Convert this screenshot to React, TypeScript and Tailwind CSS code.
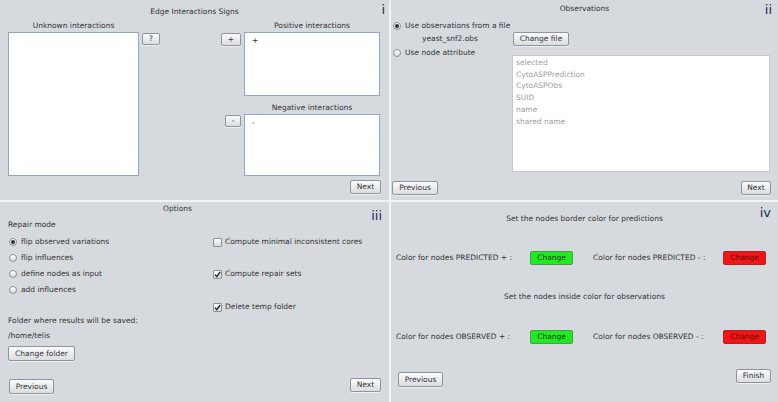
import React from "react";

const font = { fontFamily: '"DejaVu Sans", "Liberation Sans", sans-serif' };

function Btn({ children, className = "" }: { children: React.ReactNode; className?: string }) {
  return (
    <div
      className={`flex items-center justify-center rounded-[2px] border border-[#8e949b] bg-linear-to-b from-[#fbfbfc] to-[#dadde1] text-[#333] shadow-[0_1px_0_rgba(255,255,255,0.6)] ${className}`}
    >
      {children}
    </div>
  );
}

function ColorBtn({ color }: { color: "green" | "red" }) {
  return color === "green" ? (
    <div className="flex h-[14px] w-[43px] items-center justify-center rounded-[2px] border border-[#4f9a4f] bg-[#22ea22] text-[#1a3a1a]">
      Change
    </div>
  ) : (
    <div className="flex h-[14px] w-[43px] items-center justify-center rounded-[2px] border border-[#b52020] bg-[#ee1616] text-[#6a0a0a]">
      Change
    </div>
  );
}

function Radio({ on = false }: { on?: boolean }) {
  return (
    <span className="inline-flex h-[8px] w-[8px] shrink-0 items-center justify-center rounded-full border border-[#8a9098] bg-linear-to-b from-white to-[#d6d9de]">
      {on && <span className="h-[4px] w-[4px] rounded-full bg-[#28303c]" />}
    </span>
  );
}

function Check({ on = false }: { on?: boolean }) {
  return (
    <span className="inline-flex h-[9px] w-[9px] shrink-0 items-center justify-center rounded-[1px] border border-[#8a9098] bg-linear-to-b from-white to-[#d6d9de]">
      {on && (
        <svg width="7" height="7" viewBox="0 0 7 7">
          <path d="M1 3.6 L2.8 5.6 L6.2 1" stroke="#1e2a3a" strokeWidth="1.4" fill="none" />
        </svg>
      )}
    </span>
  );
}

function Num({ children }: { children: React.ReactNode }) {
  return <span className="text-[13px] leading-[13px] text-[#1b2a55]">{children}</span>;
}

function PanelI() {
  return (
    <div className="relative h-[200px] bg-[#d6d9de]">
      <div className="absolute right-[4px] top-[3px]">
        <Num>i</Num>
      </div>
      <div className="pt-[7px] text-center leading-[10px]">Edge Interactions Signs</div>
      <div className="mt-[4px] flex">
        <div className="ml-[8px] w-[131px]">
          <div className="h-[10px] text-center leading-[10px]">Unknown interactions</div>
          <div className="mt-[1px] h-[144px] border border-[#8fa8c6] bg-white" />
        </div>
        <Btn className="ml-[3px] mt-[12px] h-[12px] w-[18px]">?</Btn>
        <div className="ml-[61px] flex w-[20px] flex-col items-end">
          <Btn className="mt-[12px] h-[13px] w-[20px]">+</Btn>
          <Btn className="mt-[69px] h-[12px] w-[16px]">-</Btn>
        </div>
        <div className="ml-[3px] w-[136px]">
          <div className="h-[10px] text-center leading-[10px]">Positive interactions</div>
          <div className="mt-[1px] h-[64px] border border-[#8fa8c6] bg-white pl-[7px] pt-[3px] leading-[10px]">+</div>
          <div className="mt-[7px] h-[10px] text-center leading-[10px]">Negative interactions</div>
          <div className="mt-[1px] h-[62px] border border-[#8fa8c6] bg-white pl-[7px] pt-[3px] leading-[10px]">-</div>
        </div>
      </div>
      <div className="mt-[4px] flex justify-end pr-[8px]">
        <Btn className="h-[14px] w-[31px]">Next</Btn>
      </div>
    </div>
  );
}

function PanelII() {
  const items = ["selected", "CytoASPPrediction", "CytoASPObs", "SUID", "name", "shared name"];
  return (
    <div className="relative h-[200px] bg-[#d6d9de]">
      <div className="absolute right-[6px] top-[3px]">
        <Num>ii</Num>
      </div>
      <div className="pt-[4px] text-center leading-[10px]">Observations</div>
      <div className="mt-[7px] flex h-[10px] items-center gap-[4px] pl-[2px] leading-[10px]">
        <Radio on />
        <span>Use observations from a file</span>
      </div>
      <div className="mt-[1px] flex h-[14px] items-center">
        <div className="w-[122px] pl-[31px]">yeast_snf2.obs</div>
        <Btn className="h-[14px] w-[56px]">Change file</Btn>
      </div>
      <div className="mt-[2px] flex">
        <div className="flex h-[10px] w-[121px] items-center gap-[4px] pl-[2px] leading-[10px]">
          <Radio />
          <span>Use node attribute</span>
        </div>
        <div className="mt-[7px] h-[117px] w-[258px] border border-[#c4c8ce] bg-white pl-[3px] pt-[1px] text-[#9b9ea3]">
          {items.map((t) => (
            <div key={t} className="leading-[11.7px]">
              {t}
            </div>
          ))}
        </div>
      </div>
      <div className="mt-[9px] flex justify-between pl-[1px] pr-[7px]">
        <Btn className="h-[14px] w-[46px]">Previous</Btn>
        <Btn className="h-[14px] w-[30px]">Next</Btn>
      </div>
    </div>
  );
}

function PanelIII() {
  const radios = ["flip observed variations", "flip influences", "define nodes as input", "add influences"];
  return (
    <div className="relative h-[200px] bg-[#d6d9de]">
      <div className="absolute right-[7px] top-[7px]">
        <Num>iii</Num>
      </div>
      <div className="pr-[34px] pt-[2px] text-center leading-[10px]">Options</div>
      <div className="mt-[6px] pl-[8px] leading-[10px]">Repair mode</div>
      <div className="mt-[4px] flex">
        <div className="w-[213px] pl-[9px]">
          {radios.map((r, i) => (
            <div key={r} className="flex h-[16px] items-center gap-[4px]">
              <Radio on={i === 0} />
              <span>{r}</span>
            </div>
          ))}
        </div>
        <div>
          <div className="flex h-[16px] items-center gap-[3px]">
            <Check />
            <span>Compute minimal inconsistent cores</span>
          </div>
          <div className="mt-[16px] flex h-[16px] items-center gap-[3px]">
            <Check on />
            <span>Compute repair sets</span>
          </div>
          <div className="mt-[17px] flex h-[16px] items-center gap-[3px]">
            <Check on />
            <span>Delete temp folder</span>
          </div>
        </div>
      </div>
      <div className="mt-[1px] pl-[8px] leading-[10px]">Folder where results will be saved:</div>
      <div className="mt-[5px] pl-[8px] leading-[10px]">/home/telis</div>
      <div className="mt-[5px] flex pl-[8px]">
        <Btn className="h-[15px] w-[67px]">Change folder</Btn>
      </div>
      <div className="mt-[17px] flex items-start justify-between pl-[9px] pr-[8px]">
        <Btn className="mt-[1px] h-[15px] w-[45px]">Previous</Btn>
        <Btn className="h-[14px] w-[31px]">Next</Btn>
      </div>
    </div>
  );
}

function PanelIV() {
  return (
    <div className="relative h-[200px] bg-[#d6d9de]">
      <div className="absolute right-[7px] top-[4px]">
        <Num>iv</Num>
      </div>
      <div className="pt-[12px] text-center leading-[10px]">Set the nodes border color for predictions</div>
      <div className="mt-[27px] flex h-[14px] items-center pl-[5px]">
        <div className="w-[134px]">Color for nodes PREDICTED + :</div>
        <ColorBtn color="green" />
        <div className="ml-[20px] w-[130px]">Color for nodes PREDICTED - :</div>
        <ColorBtn color="red" />
      </div>
      <div className="mt-[27px] text-center leading-[10px]">Set the nodes inside color for observations</div>
      <div className="mt-[28px] flex h-[14px] items-center pl-[5px]">
        <div className="w-[134px]">Color for nodes OBSERVED + :</div>
        <ColorBtn color="green" />
        <div className="ml-[20px] w-[130px]">Color for nodes OBSERVED - :</div>
        <ColorBtn color="red" />
      </div>
      <div className="mt-[25px] flex items-start justify-between pl-[7px] pr-[7px]">
        <Btn className="mt-[3px] h-[15px] w-[45px]">Previous</Btn>
        <Btn className="h-[14px] w-[35px]">Finish</Btn>
      </div>
    </div>
  );
}

export default function App() {
  return (
    <div
      className="grid h-[402px] w-[778px] grid-cols-[389px_387px] grid-rows-[200px_200px] gap-[2px] overflow-hidden bg-[#f2f3f5] text-[7.5px] text-[#333]"
      style={font}
    >
      <PanelI />
      <PanelII />
      <PanelIII />
      <PanelIV />
    </div>
  );
}
